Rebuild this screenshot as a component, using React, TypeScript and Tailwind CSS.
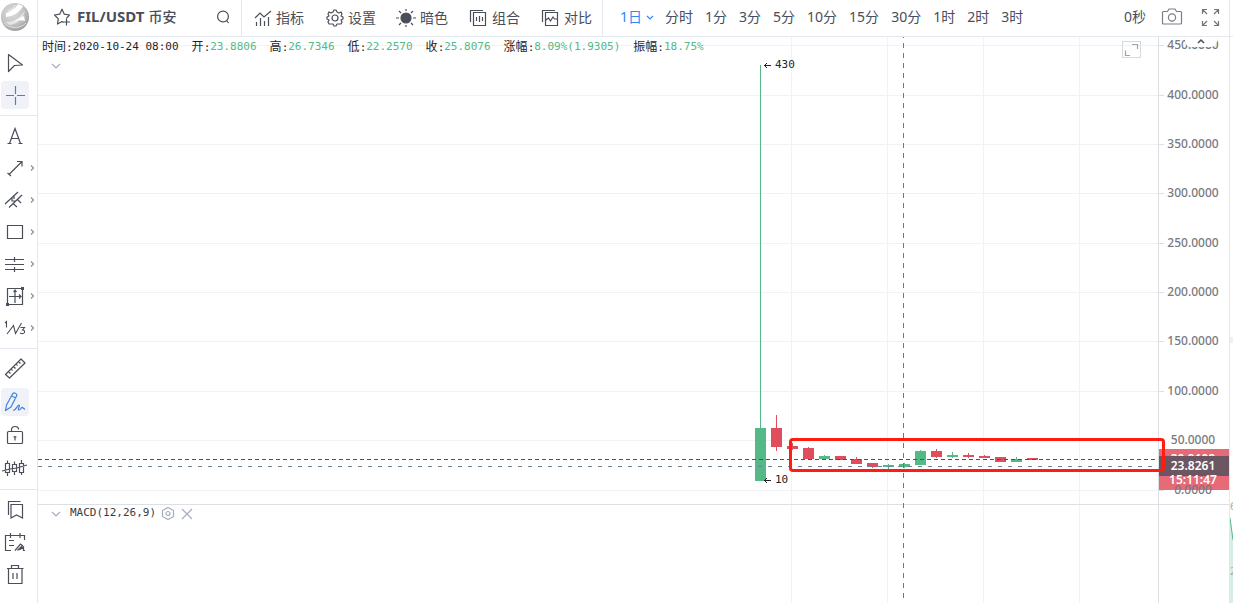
import type { ReactNode } from "react";

const UP = "#53b987";
const DOWN = "#e04e5e";

function Icon({ size = 20, className = "", children }: { size?: number; className?: string; children: ReactNode }) {
  return (
    <svg
      className={`shrink-0 overflow-visible ${className}`}
      width={size}
      height={size}
      viewBox={`0 0 ${size} ${size}`}
      fill="none"
      stroke="currentColor"
      strokeWidth="1.2"
      aria-hidden="true"
    >
      {children}
    </svg>
  );
}

function Logo() {
  return (
    <svg width="30" height="30" viewBox="0 0 30 30" aria-hidden="true">
      <defs>
        <radialGradient id="ball" cx="0.4" cy="0.35" r="0.7">
          <stop offset="0" stopColor="#dcdcdc" />
          <stop offset="0.6" stopColor="#c4c4c4" />
          <stop offset="1" stopColor="#9a9a9a" />
        </radialGradient>
      </defs>
      <circle cx="15" cy="16" r="14" fill="url(#ball)" />
      <path d="M6 12C10 11 15 8 18 3L23 5C20 11 14 15 6 16Z" fill="#fff" />
      <path d="M8 10C12 9 14 7 15 4" stroke="#f2f2f2" fill="none" />
      <path d="M5 21C14 22 21 16 25 9C24 15 20 22 10 24Z" fill="#e6e6e6" />
      <path d="M13 21C17 19 21 16 24 15L25 20C22 19 17 19 13 21Z" fill="#fff" />
      <path d="M4 22C10 28 20 28 26 22" stroke="#dedede" fill="none" />
    </svg>
  );
}

const tools: { label: string; icon: ReactNode }[] = [
  {
    label: "指标",
    icon: (
      <Icon size={18}>
        <path d="M1 9L6 4L10 8L17 2M2.5 17V13M6.5 17V9M10.5 17V12M14.5 17V8" />
      </Icon>
    ),
  },
  {
    label: "设置",
    icon: (
      <Icon size={18}>
        <path
          strokeLinejoin="round"
          d="M7 3L8 1H10L11 3L13 4L15 3L16 5L15 7L17 8V10L15 11L16 13L15 15L13 15L11 15L10 17H8L7 15L5 15L3 15L2 13L3 11L1 10V8L3 7L2 5L3 3L5 4Z"
        />
        <circle cx="9" cy="9" r="3" />
      </Icon>
    ),
  },
  {
    label: "暗色",
    icon: (
      <Icon size={18}>
        <circle cx="8" cy="9" r="5" fill="currentColor" />
        <path d="M8 0V2M8 16V18M-2 9H1M15 9H18M1 2L3 4M13 14L15 16M1 16L3 14M13 4L15 2" />
      </Icon>
    ),
  },
  {
    label: "组合",
    icon: (
      <Icon size={18}>
        <path d="M3.5 3.5H15.5V16.5H3.5ZM0.5 13V1.5H13M6.5 8V12M9.5 7V13M12.5 8V12" />
      </Icon>
    ),
  },
  {
    label: "对比",
    icon: (
      <Icon size={18}>
        <path d="M3.5 3.5H15.5V16.5H3.5ZM0.5 13V1.5H13M4 11L6.5 9L8.5 12L11 8L12.5 10H15" />
      </Icon>
    ),
  },
];

const periods = ["分时", "1分", "3分", "5分", "10分", "15分", "30分", "1时", "2时", "3时"];

function Header() {
  return (
    <header className="flex h-[37px] shrink-0 items-stretch border-b border-[#e3e7ee] text-sm whitespace-nowrap">
      <div className="flex w-[38px] shrink-0 items-center border-r border-[#e3e7ee] pb-1">
        <Logo />
      </div>
      <div className="flex w-[204px] shrink-0 items-center border-r border-[#e3e7ee] pr-[11px] pb-0.5 pl-[15px]">
        <button aria-label="收藏">
          <Icon size={18}>
            <path
              strokeLinejoin="round"
              d="M10.5 14.5L9 13.5L4.5 16L5.3 10.8L1.5 7L6.7 6.2L9 1.2L11.3 6.2L16.5 7L13.5 10.2M13.5 10.5V17.5M10 14H17"
            />
          </Icon>
        </button>
        <h1 className="ml-1.5 flex items-center gap-1 font-bold">
          <span className="text-[15px]">FIL/USDT</span>
          <span className="font-medium">币安</span>
        </h1>
        <button className="ml-auto" aria-label="搜索">
          <Icon size={14}>
            <circle cx="7" cy="6.5" r="5.4" />
            <path d="M10.5 10.5L12.5 13" />
          </Icon>
        </button>
      </div>
      <div className="flex shrink-0 items-center gap-[22px] border-r border-[#e3e7ee] pr-2.5 pl-3">
        {tools.map((t) => (
          <button key={t.label} className="flex items-center gap-1">
            {t.icon}
            {t.label}
          </button>
        ))}
      </div>
      <nav className="flex items-center gap-3 pb-0.5 pl-[17px]">
        <button className="flex items-center gap-1 text-[#3187f5]">
          1日
          <Icon size={8} className="-mr-px">
            <path d="M1 3L4 6L7 3" />
          </Icon>
        </button>
        {periods.map((p) => (
          <button key={p}>{p}</button>
        ))}
      </nav>
      <div className="ml-auto flex shrink-0 items-center pr-2.5 pb-0.5">
        <button>0秒</button>
        <button className="ml-4 text-[#7a7e88]" aria-label="截图">
          <Icon size={20}>
            <path
              strokeLinejoin="round"
              d="M1.5 4.5H5.5L7 2H13L14.5 4.5H18.5Q19.5 4.5 19.5 5.5V16Q19.5 17 18.5 17H1.5Q0.5 17 0.5 16V5.5Q0.5 4.5 1.5 4.5Z"
            />
            <circle cx="10" cy="10.5" r="3.6" />
          </Icon>
        </button>
        <button className="ml-5 text-[#70747e]" aria-label="全屏">
          <Icon size={17}>
            <path d="M0.5 5V0.5H5M0.5 0.5L5 5M12 0.5H16.5V5M16.5 0.5L12 5M0.5 12V16.5H5M0.5 16.5L5 12M12 16.5H16.5V12M16.5 16.5L12 12" />
          </Icon>
        </button>
      </div>
    </header>
  );
}

type Tool = { name: string; more?: boolean; active?: boolean; draw: ReactNode };

const cursorTools: Tool[] = [
  { name: "光标", draw: <path strokeLinejoin="round" d="M3.5 1.5L17.5 12L9.5 12.5L3.5 18.5Z" /> },
  { name: "十字", active: true, draw: <path d="M10.5 1V9M10.5 12V20M1 10.5H9M12 10.5H20" /> },
];

const drawTools: Tool[] = [
  { name: "文字", draw: <path d="M4.5 17.5L10 2.5L15.5 17.5M6.5 12.5H13.5M2.5 17.5H6.5M13.5 17.5H17.5" /> },
  { name: "线段", more: true, draw: <path d="M4 16.5L16.5 4M12 3.5H17V8.500M2.5 15L6 18" /> },
  {
    name: "平行线",
    more: true,
    draw: <path d="M0 14L13 2M4 17.5L17 5M7 7.5V11H11M9 9V5M8 13.500L12 17M12 9L16 13" />,
  },
  { name: "矩形", more: true, draw: <path d="M2.5 3.5H17.5V16.5H2.5Z" /> },
  { name: "水平线", more: true, draw: <path d="M0 5.5H19M0 10.5H19M0 15.5H19M9.5 3V8M9.5 13V18" /> },
  {
    name: "区间",
    more: true,
    draw: (
      <>
        <path d="M2.5 2.5H17.5V18.5H2.5ZM10 4V17M4 10.5H16M14 8.5L16 10.5L14 12.5M8.5 6L10 4L11.5 6" />
        <path fill="currentColor" stroke="none" d="M16 1H19V4H16ZM1 17H4V20H1Z" />
      </>
    ),
  },
  {
    name: "波浪",
    more: true,
    draw: (
      <path
        strokeWidth="1.1"
        d="M2 16L8.500 7.5L10.5 15.5L16.500 5M0 5L1.500 3.500V9.5M15.5 9.5H19.500L17.5 12Q20 12 19.5 14.5Q18 16.500 15 15"
      />
    ),
  },
];

const editTools: Tool[] = [
  {
    name: "测量",
    draw: (
      <path
        strokeLinejoin="round"
        d="M16 0L20 4L4.5 19L0.5 15.5ZM3.5 12.5L5.5 14.5M6 10L7.5 11.5M8.5 7.5L10.500 9.5M11 5L12.5 6.500M13.5 2.5L15.5 4.5"
      />
    ),
  },
  {
    name: "画笔",
    active: true,
    draw: (
      <path
        strokeLinejoin="round"
        d="M0.5 18.5L1.5 13L7.5 2Q10 -0.500 12 3L6 15ZM6.500 4L11 6M0.5 18.500L6 15M8 18.5C11 19 12 13 14 13C15.500 13 12 18 14 18C16 18 16 15 17.500 15.500L20 17.5"
      />
    ),
  },
  {
    name: "锁定",
    draw: (
      <>
        <rect x="2.5" y="6.5" width="15" height="12" rx="1" />
        <path d="M6.5 6.5V4Q7 1.500 10 1.5Q13 1.5 13.5 3.5V4.5M10 11V15.500M8.5 12H11.5" />
      </>
    ),
  },
  {
    name: "K线连接",
    draw: (
      <path d="M0.5 5.5H4.5V14.5H0.5ZM7.5 6.5H11.5V13.5H7.5ZM14.5 5.5H18.5V14.5H14.5ZM2.5 2.5V5.5M2.5 14.5V18M9.5 3.5V6.5M9.5 13.5V17M16.5 2V5.5M16.5 14.5V17M-3 13L5 11L12 10L22 7" />
    ),
  },
];

const pageTools: Tool[] = [
  { name: "书签", draw: <path d="M6 4.5H17.5V18L11.5 15L6 18ZM3.5 15V1.5H15.500" /> },
  {
    name: "笔记",
    draw: (
      <path d="M4 3.5H0.5V18.5H6M0 3.500H19.500V8M5.5 1V6M15 1V6M4 8.5H9M4 13.500H9M10 18.5L15.500 12L17.500 13.5L14 18M12.500 18.500L17 14M15 17.5L18.500 15V18.5H20" />
    ),
  },
  { name: "删除", draw: <path d="M2 4.5H18.5M6.5 4.5V1.5H13.5V4.5M3.5 4.5V19.5H17V4.5M8 9V15M12 9V15" /> },
];

function ToolButton({ tool }: { tool: Tool }) {
  return (
    <div className="flex items-center">
      <button
        aria-label={tool.name}
        className={`flex size-7 shrink-0 items-center justify-center rounded-sm ${tool.active ? "bg-[#f0f2f7] text-[#3c83e0]" : ""}`}
      >
        <Icon size={20}>{tool.draw}</Icon>
      </button>
      {tool.more && (
        <Icon size={6} className="text-[#8b909a]">
          <path d="M2 0.500L4.500 3L2 5.500" />
        </Icon>
      )}
    </div>
  );
}

function Sidebar() {
  return (
    <aside className="w-[38px] shrink-0 overflow-hidden border-r border-[#e3e7ee] pt-1.5 *:pl-px">
      <div className="flex flex-col gap-1 py-1.5">
        {cursorTools.map((t) => (
          <ToolButton key={t.name} tool={t} />
        ))}
      </div>
      <div className="flex flex-col gap-1 border-t border-[#e3e7ee] py-1.5">
        {drawTools.map((t) => (
          <ToolButton key={t.name} tool={t} />
        ))}
      </div>
      <div className="flex flex-col gap-[5px] border-t border-[#e3e7ee] pt-1.5 pb-[7px]">
        {editTools.map((t) => (
          <ToolButton key={t.name} tool={t} />
        ))}
      </div>
      <div className="flex flex-col gap-1 border-t border-[#e3e7ee] py-1.5">
        {pageTools.map((t) => (
          <ToolButton key={t.name} tool={t} />
        ))}
      </div>
    </aside>
  );
}

const ohlc = [
  { label: "时间", value: "2020-10-24 08:00", plain: true },
  { label: "开", value: "23.8806" },
  { label: "高", value: "26.7346" },
  { label: "低", value: "22.2570" },
  { label: "收", value: "25.8076" },
  { label: "涨幅", value: "8.09%(1.9305)" },
  { label: "振幅", value: "18.75%" },
];

const priceLevels = [450, 400, 350, 300, 250, 200, 150, 100, 50, 0];
const levelY = (price: number) => Math.floor(453 - price * 0.9874);

// [up, body top, body bottom, wick top, wick bottom]
const candles: [boolean, number, number, number, number][] = [
  [true, 391, 444, 28, 444],
  [false, 391, 410, 378, 414],
  [false, 409, 412, 406, 413],
  [false, 411, 422, 410, 422],
  [true, 419, 422, 418, 422],
  [false, 419, 423, 419, 423],
  [false, 422, 427, 420, 427],
  [false, 426, 430, 426, 431],
  [true, 428, 430, 427, 432],
  [true, 427, 430, 426, 431],
  [true, 414, 428, 413, 428],
  [false, 414, 420, 412, 421],
  [true, 418, 420, 415, 421],
  [false, 418, 420, 416, 421],
  [false, 419, 421, 418, 421],
  [false, 420, 425, 420, 425],
  [true, 422, 425, 420, 425],
  [false, 421, 423, 421, 423],
];

function Plot() {
  return (
    <svg className="block size-full font-['DejaVu_Sans_Mono',monospace] text-[11px]" shapeRendering="crispEdges">
      {priceLevels.map((p) => (
        <rect key={p} x="0" y={levelY(p)} width="100%" height="1" fill="#f0f3f5" />
      ))}
      {[753, 849, 945, 1041].map((x) => (
        <rect key={x} x={x} y="0" width="1" height="100%" fill="#f0f3f5" />
      ))}
      <rect x="0" y="467" width="100%" height="1" fill="#dcdfe4" />
      {candles.map(([up, top, bottom, high, low], i) => (
        <g key={i} fill={up ? UP : DOWN}>
          <rect x={717 + i * 16} y={top} width="11" height={bottom - top} />
          <rect x={722 + i * 16} y={high} width="1" height={low - high} />
        </g>
      ))}
      <line x1="0" y1="422.5" x2="100%" y2="422.5" stroke="#96323b" strokeDasharray="4 3" />
      <line x1="0" y1="429.5" x2="100%" y2="429.5" stroke="#6d8196" strokeDasharray="4 6" />
      <line x1="865.5" y1="-4" x2="865.5" y2="562" stroke="#6f7885" strokeDasharray="5 5" />
      <g stroke="#1f2329" fill="none" shapeRendering="auto">
        <path d="M726 28.5H733M729 26L726.5 28.5L729 31M726 443.5H733M729 441L726.5 443.5L729 446" />
      </g>
      <text x="737" y="31" fill="#1f2329">
        430
      </text>
      <text x="737" y="446" fill="#1f2329">
        10
      </text>
    </svg>
  );
}

function PriceAxis() {
  return (
    <div className="w-[71px] shrink-0 border-l border-[#dcdfe4]">
      <svg
        className="block size-full font-['Noto_Sans','Open_Sans',sans-serif] text-xs font-medium"
        textAnchor="middle"
        fill="#777a80"
      >
        <rect x="-1" y="412" width="71" height="41" fill="#e66a78" />
        {priceLevels.map((p) => (
          <g key={p}>
            <rect x="0" y={levelY(p)} width="5" height="1" fill="#dcdfe4" />
            <text x="34" y={levelY(p) + 4}>
              {p.toFixed(4)}
            </text>
          </g>
        ))}
        <text x="34" y="426" fill="#fff" className="font-semibold">
          30.9109
        </text>
        <rect x="-1" y="419" width="71" height="20" fill="#6c5661" />
        <g fill="#fff" className="font-semibold">
          <text x="34" y="433">
            23.8261
          </text>
          <text x="34" y="447">
            15:11:47
          </text>
        </g>
        <rect x="0" y="467" width="100%" height="1" fill="#dcdfe4" />
      </svg>
    </div>
  );
}

function Chart() {
  return (
    <main className="relative flex min-w-0 flex-1 overflow-hidden">
      <div className="min-w-0 flex-1">
        <Plot />
      </div>
      <PriceAxis />

      <div className="absolute top-px left-1 text-[#1f2329]">
        <dl className="flex gap-[13px] font-['DejaVu_Sans_Mono','Noto_Sans_CJK_SC',monospace] text-[11px] leading-[18px] whitespace-nowrap">
          {ohlc.map((o) => (
            <div key={o.label} className="flex">
              <dt>
                <span className="text-xs leading-[18px]">{o.label}</span>:
              </dt>
              <dd className={o.plain ? "" : "text-[#53b987]"}>{o.value}</dd>
            </div>
          ))}
        </dl>
        <button className="ml-2.5 block py-[3px] text-[#a5adc0]" aria-label="收起">
          <Icon size={8} className="block">
            <path d="M0 4L4 8L8 4" />
          </Icon>
        </button>
      </div>

      <div className="absolute top-[468px] left-3.5 flex h-4 items-center text-[#a5adc0]">
        <button aria-label="收起指标">
          <Icon size={8} className="block">
            <path d="M0 3L4 7L8 3" />
          </Icon>
        </button>
        <span className="ml-2.5 font-['DejaVu_Sans_Mono',monospace] text-[11px] text-[#3a3d45]">MACD(12,26,9)</span>
        <button className="ml-[5px]" aria-label="指标设置">
          <Icon size={14} className="block">
            <path d="M7 1.5L12.5 4.5V10.5L7 13.5L1.5 10.5V4.5Z" />
            <circle cx="7" cy="7.5" r="2" />
          </Icon>
        </button>
        <button className="ml-1.5" aria-label="关闭指标">
          <Icon size={12} className="block">
            <path d="M1 2L11 12M11 2L1 12" />
          </Icon>
        </button>
      </div>

      <button
        className="absolute top-1 right-[88px] flex h-[17px] w-[19px] items-center justify-center border border-[#d6dae0] text-[#9ba3b0]"
        aria-label="最大化"
      >
        <Icon size={13}>
          <path d="M7 1.5H12.5V6M0.5 7.5V12.5H5" />
        </Icon>
      </button>

      <button
        className="absolute top-0 right-3 flex h-2.5 w-8 items-center justify-center rounded-b-md bg-white text-[#4a4e59] shadow-sm"
        aria-label="收起工具栏"
      >
        <Icon size={8}>
          <path d="M1 5L4 2L7 5" strokeWidth="1.5" />
        </Icon>
      </button>

      <div className="pointer-events-none absolute top-[401px] left-[751px] h-[34px] w-[376px] rounded-sm border-3 border-[#ff1d12]" />
    </main>
  );
}

// Edge of the neighbouring depth panel
function DepthEdge() {
  return (
    <div className="w-1 shrink-0 overflow-hidden border-l border-[#e3e7ee]">
      <svg className="block size-full font-['Noto_Sans',sans-serif] text-[11px]" fill="#a3a7ae">
        <rect y="36" width="3" height="1" fill="#e3e7ee" />
        <path d="M0 518L3 540V603H0Z" fill="#d5efe2" />
        <path d="M0 518L3 540" stroke={UP} />
        <rect y="337" width="3" height="6" fill="#eef0f3" />
        <text x="0" y="510">
          6
        </text>
        <text x="0" y="575">
          2
        </text>
      </svg>
    </div>
  );
}

export default function App() {
  return (
    <div className="flex h-screen overflow-hidden bg-white font-['Noto_Sans','Noto_Sans_CJK_SC',sans-serif] text-[#4a4e59]">
      <div className="flex min-w-0 flex-1 flex-col">
        <Header />
        <div className="flex min-h-0 flex-1">
          <Sidebar />
          <Chart />
        </div>
      </div>
      <DepthEdge />
    </div>
  );
}
